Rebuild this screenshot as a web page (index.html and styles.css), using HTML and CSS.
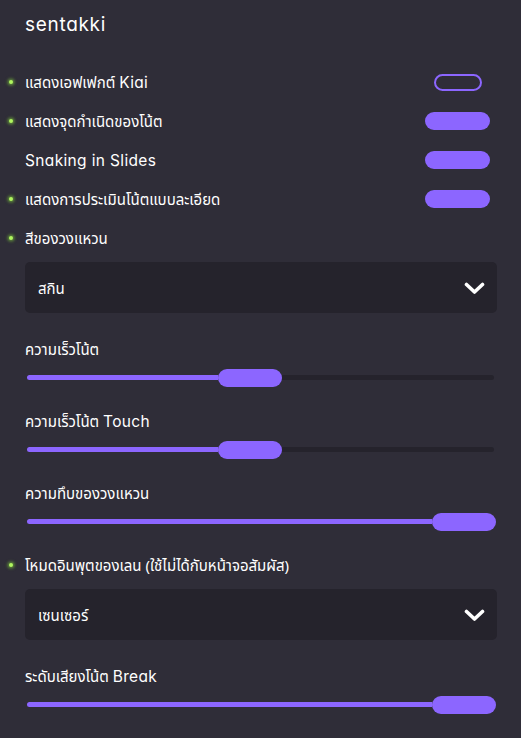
FILE: index.html
```html
<!DOCTYPE html>
<html lang="th">
<head>
<meta charset="utf-8">
<link rel="stylesheet" href="styles.css">
</head>
<body>
<div class="panel">
  <div class="header"><h1 class="title">sentakki</h1></div>

  <div class="row">
    <span class="dot"></span>
    <span class="label">แสดงเอฟเฟกต์ <span class="lat">Kiai</span></span>
    <span class="toggle off"></span>
  </div>
  <div class="row">
    <span class="dot"></span>
    <span class="label">แสดงจุดกำเนิดของโน้ต</span>
    <span class="toggle on"></span>
  </div>
  <div class="row">
    <span class="label"><span class="lat">Snaking in Slides</span></span>
    <span class="toggle on"></span>
  </div>
  <div class="row">
    <span class="dot"></span>
    <span class="label">แสดงการประเมินโน้ตแบบละเอียด</span>
    <span class="toggle on"></span>
  </div>

  <div class="row">
    <span class="dot"></span>
    <span class="label">สีของวงแหวน</span>
  </div>
  <div class="dropdown">
    <span class="dd-text">สกิน</span>
    <svg class="chevron" viewBox="0 0 21 13" width="21" height="13"><polyline points="2.5,2.5 10.5,10 18.5,2.5" fill="none" stroke="#fff" stroke-width="3.6" stroke-linecap="round" stroke-linejoin="round"/></svg>
  </div>

  <div class="row"><span class="label">ความเร็วโน้ต</span></div>
  <div class="slider">
    <span class="fill" style="width:191px"></span><span class="thumb"></span><span class="rest"></span>
  </div>

  <div class="row"><span class="label">ความเร็วโน้ต <span class="lat">Touch</span></span></div>
  <div class="slider">
    <span class="fill" style="width:191px"></span><span class="thumb"></span><span class="rest"></span>
  </div>

  <div class="row"><span class="label">ความทึบของวงแหวน</span></div>
  <div class="slider">
    <span class="fill" style="width:405px"></span><span class="thumb"></span>
  </div>

  <div class="row">
    <span class="dot"></span>
    <span class="label">โหมดอินพุตของเลน (ใช้ไม่ได้กับหน้าจอสัมผัส)</span>
  </div>
  <div class="dropdown">
    <span class="dd-text">เซนเซอร์</span>
    <svg class="chevron" viewBox="0 0 21 13" width="21" height="13"><polyline points="2.5,2.5 10.5,10 18.5,2.5" fill="none" stroke="#fff" stroke-width="3.6" stroke-linecap="round" stroke-linejoin="round"/></svg>
  </div>

  <div class="row"><span class="label">ระดับเสียงโน้ต <span class="lat">Break</span></span></div>
  <div class="slider">
    <span class="fill" style="width:405px"></span><span class="thumb"></span>
  </div>
</div>
</body>
</html>
```

FILE: styles.css
```css
html, body {
  margin: 0;
  padding: 0;
  background: #2f2d38;
  color: #ffffff;
  font-family: "Noto Sans", "Noto Sans Thai", "DejaVu Sans", sans-serif;
  overflow: hidden;
}

.panel {
  display: flex;
  flex-direction: column;
  width: 521px;
  height: 738px;
  padding: 0 24px 0 25px;
  box-sizing: border-box;
}

.header {
  height: 62.5px;
  display: flex;
  align-items: flex-start;
}

.title {
  margin: 11px 0 0 0;
  font-family: Inter, "Noto Sans", sans-serif;
  font-feature-settings: "cv11" 1;
  font-size: 19px;
  font-weight: 400;
  line-height: 28px;
  letter-spacing: 0.7px;
}

.lat {
  font-family: Inter, "Noto Sans", sans-serif;
  font-feature-settings: "cv11" 1;
  font-size: 15.5px;
  font-weight: 380;
  letter-spacing: 0.35px;
}

.row {
  position: relative;
  height: 39px;
  flex: 0 0 39px;
  display: flex;
  align-items: center;
}

.label {
  font-size: 15px;
  line-height: 20px;
  flex: 1;
  white-space: nowrap;
}

.dot {
  position: absolute;
  left: -16px;
  top: 17px;
  width: 4px;
  height: 4px;
  border-radius: 2px;
  background: #b0f560;
  box-shadow: 0 0 3px 1.5px rgba(140, 230, 60, 0.5);
}

.toggle {
  box-sizing: border-box;
  border-radius: 10px;
}

.toggle.off {
  width: 48px;
  height: 17px;
  border: 2.5px solid #8c66ff;
  margin-right: 15px;
}

.toggle.on {
  width: 65px;
  height: 18px;
  background: #8c66ff;
  margin-right: 7px;
}

.dropdown {
  flex: 0 0 51px;
  height: 51px;
  margin: 4.5px 0 16.5px 0;
  background: #25232c;
  border-radius: 5px;
  display: flex;
  align-items: center;
  justify-content: space-between;
  padding: 0 12px 0 13px;
  box-sizing: border-box;
}

.dd-text {
  font-size: 15px;
  line-height: 20px;
}

.chevron {
  display: block;
  margin-top: 1px;
}

.slider {
  flex: 0 0 33px;
  height: 33px;
  display: flex;
  align-items: flex-start;
  margin-left: 2px;
  width: 469px;
}

.fill {
  display: block;
  height: 5px;
  margin-top: 6.5px;
  background: #8c66ff;
  border-radius: 3px 0 0 3px;
  flex: none;
}

.thumb {
  display: block;
  flex: none;
  width: 64px;
  height: 18px;
  background: #8c66ff;
  border-radius: 9px;
}

.rest {
  display: block;
  flex: 1;
  height: 5px;
  margin-top: 6.5px;
  margin-right: 2px;
  background: #25232c;
  border-radius: 0 3px 3px 0;
}
```
